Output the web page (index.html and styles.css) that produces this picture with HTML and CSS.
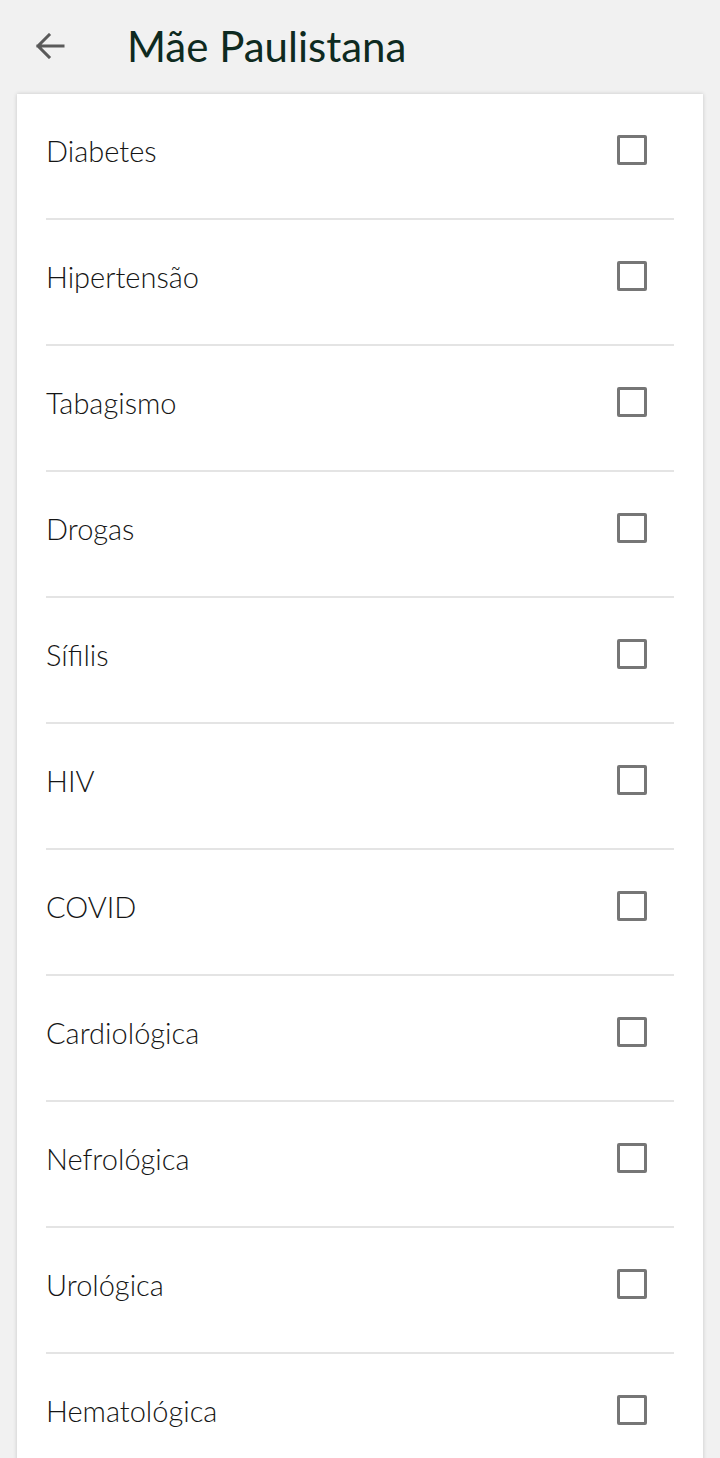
FILE: index.html
```html
<!DOCTYPE html>
<html lang="pt-BR">
<head>
<meta charset="utf-8">
<title>Mãe Paulistana</title>
<link rel="stylesheet" href="styles.css">
</head>
<body>
<header class="appbar">
  <svg class="back" width="30" height="26" viewBox="0 0 30 26" aria-hidden="true">
    <path d="M28 13H3M14 2L3 13l11 11" fill="none" stroke="#5a5a5a" stroke-width="3" stroke-linecap="square"/>
  </svg>
  <h1 class="title">Mãe Paulistana</h1>
</header>
<main class="card">
  <label class="row"><span class="label">Diabetes</span><span class="box"></span></label>
  <label class="row"><span class="label">Hipertensão</span><span class="box"></span></label>
  <label class="row"><span class="label">Tabagismo</span><span class="box"></span></label>
  <label class="row"><span class="label">Drogas</span><span class="box"></span></label>
  <label class="row"><span class="label">Sífilis</span><span class="box"></span></label>
  <label class="row"><span class="label">HIV</span><span class="box"></span></label>
  <label class="row"><span class="label">COVID</span><span class="box"></span></label>
  <label class="row"><span class="label">Cardiológica</span><span class="box"></span></label>
  <label class="row"><span class="label">Nefrológica</span><span class="box"></span></label>
  <label class="row"><span class="label">Urológica</span><span class="box"></span></label>
  <label class="row"><span class="label">Hematológica</span><span class="box"></span></label>
</main>
</body>
</html>
```
FILE: styles.css
```css
html, body {
  margin: 0;
  padding: 0;
  background: #f1f1f1;
  font-family: Lato, "Noto Sans", sans-serif;
}
body {
  height: 1458px;
  overflow: hidden;
}
.appbar {
  height: 94px;
  display: flex;
  align-items: center;
  padding-left: 35px;
  box-sizing: border-box;
}
.back {
  display: block;
  margin-top: -3px;
}
.title {
  margin: -2px 0 0 62px;
  font-size: 42px;
  font-weight: 400;
  color: #0e2a20;
}
.card {
  margin: 0 17px;
  background: #fff;
  box-shadow: 0 0 4px rgba(0,0,0,0.18);
  padding: 0 29px;
}
.row {
  display: flex;
  align-items: center;
  justify-content: space-between;
  height: 126px;
  padding-bottom: 12px;
  box-sizing: border-box;
  border-bottom: 2px solid #e4e4e4;
}
.label {
  font-size: 29px;
  font-weight: 300;
  color: #151515;
}
.box {
  width: 24px;
  height: 24px;
  border: 3px solid #767676;
  border-radius: 2px;
  margin-right: 27px;
}
```
